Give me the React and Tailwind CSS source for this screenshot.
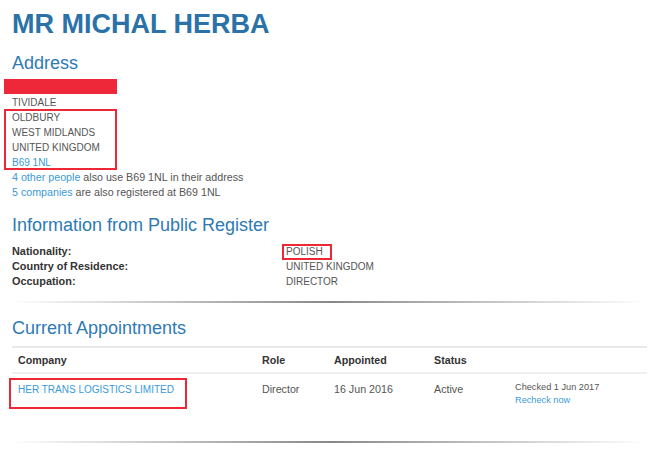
import React from "react";

const font = { fontFamily: '"Liberation Sans", Arial, sans-serif' };

export default function App() {
  return (
    <div className="w-[666px] h-[456px] bg-white overflow-hidden" style={font}>
      <div className="pl-3 pr-[19px] pt-[8px]">
        <h1 className="text-[27px] leading-[32px] font-bold text-[#2a72a8]">MR MICHAL HERBA</h1>

        <h2 className="mt-[13px] text-[18px] leading-[20px] text-[#2d7ab3]">Address</h2>
        <div className="mt-[6px] text-[10.7px] leading-[15px] text-[#555]">
          <div className="h-[15px] mb-[1px] -ml-2 w-[113px] bg-[#ef2839]" />
          <div className="text-[10px]">TIVIDALE</div>
          <div className="relative">
            <div className="absolute -left-2 -top-px w-[113px] h-[61px] border-2 border-[#ee2737]" />
            <div className="text-[10px]">OLDBURY</div>
            <div className="text-[10px]">WEST MIDLANDS</div>
            <div className="text-[10px]">UNITED KINGDOM</div>
            <div className="text-[10px] text-[#3a9ad9]">B69 1NL</div>
          </div>
          <div>
            <span className="text-[#3a9ad9]">4 other people</span> also use B69 1NL in their address
          </div>
          <div>
            <span className="text-[#3a9ad9]">5 companies</span> are also registered at B69 1NL
          </div>
        </div>

        <h2 className="mt-[15px] text-[18px] leading-[20px] text-[#2d7ab3]">Information from Public Register</h2>
        <div className="mt-[9px] grid grid-cols-[274px_1fr] text-[10.9px] leading-[15px]">
          <div className="font-bold text-[#333]">Nationality:</div>
          <div className="text-[10px] text-[#555]">
            <span className="relative">
              <span className="absolute left-[-4px] top-[-2px] w-[50px] h-[16px] border-2 border-[#ee2737]" />
              POLISH
            </span>
          </div>
          <div className="font-bold text-[#333]">Country of Residence:</div>
          <div className="text-[10px] text-[#555]">UNITED KINGDOM</div>
          <div className="font-bold text-[#333]">Occupation:</div>
          <div className="text-[10px] text-[#555]">DIRECTOR</div>
        </div>

        <div className="mt-[12px] h-[2px] bg-gradient-to-r from-transparent via-[#6a6a6a] to-transparent opacity-80" />

        <h2 className="mt-[15px] text-[18px] leading-[20px] text-[#2d7ab3]">Current Appointments</h2>

        <div className="mt-[8px] border-t-2 border-[#e9e9e9]">
          <div className="grid grid-cols-[244px_72px_100px_81px_1fr] h-[26px] items-center border-b-2 border-[#efefef] text-[10.7px] font-bold text-[#333]">
            <div className="pl-[6px]">Company</div>
            <div className="pl-[6px]">Role</div>
            <div className="pl-[6px]">Appointed</div>
            <div className="pl-[6px]">Status</div>
            <div />
          </div>
          <div className="grid grid-cols-[244px_72px_100px_81px_1fr] items-start pt-[8px] text-[10.7px] leading-[15px] text-[#555]">
            <div className="relative pl-[6px]">
              <div className="absolute left-[-3px] top-[-4px] w-[178px] h-[31px] border-2 border-[#ee2737]" />
              <span className="text-[10px] text-[#3a9ad9]">HER TRANS LOGISTICS LIMITED</span>
            </div>
            <div className="pl-[6px]">Director</div>
            <div className="pl-[6px]">16 Jun 2016</div>
            <div className="pl-[6px]">Active</div>
            <div className="pl-[6px] text-[9.2px] leading-[12.5px]">
              <div className="-mt-[1px]">Checked 1 Jun 2017</div>
              <div className="text-[#3a9ad9]">Recheck now</div>
            </div>
          </div>
        </div>

        <div className="mt-[35px] h-[2px] bg-gradient-to-r from-transparent via-[#6a6a6a] to-transparent opacity-80" />
      </div>
    </div>
  );
}
